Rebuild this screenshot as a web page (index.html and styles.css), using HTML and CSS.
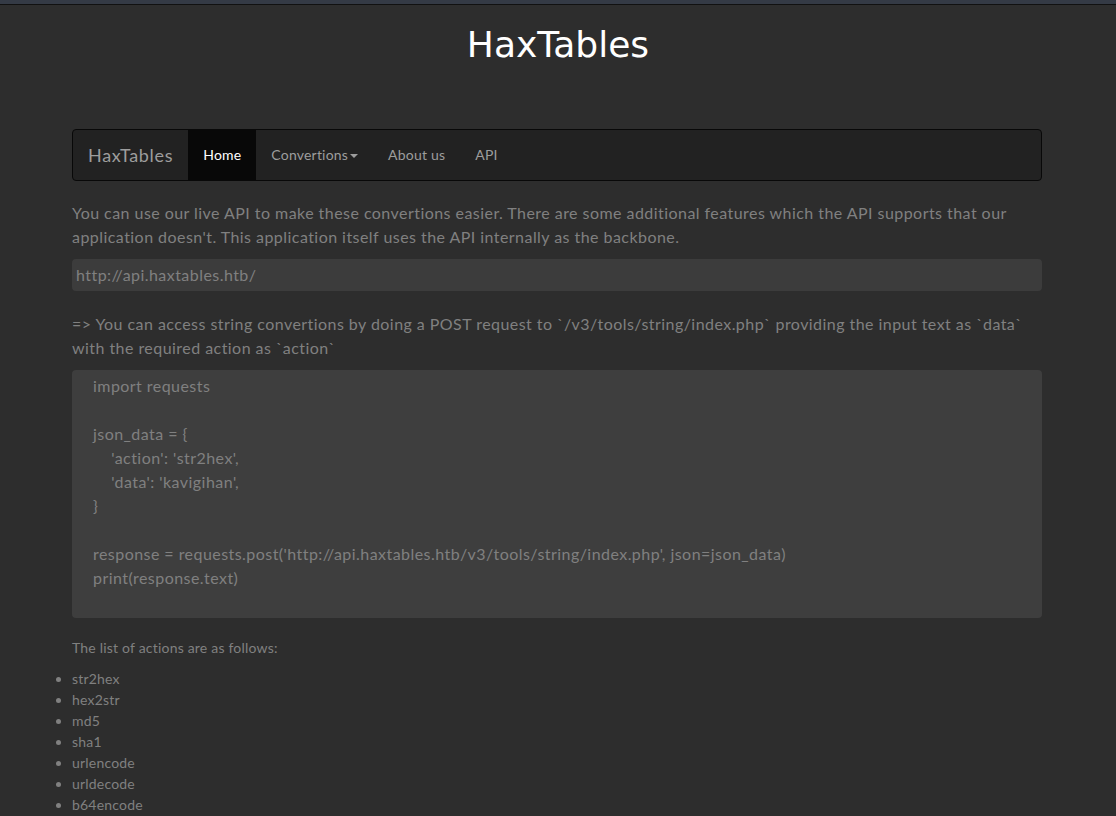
FILE: index.html
```html
<!DOCTYPE html>
<html>
<head>
<meta charset="utf-8">
<title>HaxTables</title>
<link rel="stylesheet" href="styles.css">
</head>
<body>
<div class="topbar"></div>
<h1 class="title">HaxTables</h1>
<div class="container">
  <nav class="navbar">
    <a class="brand" href="#">HaxTables</a>
    <ul class="nav">
      <li class="active"><a href="#">Home</a></li>
      <li><a href="#">Convertions<span class="caret"></span></a></li>
      <li><a href="#">About us</a></li>
      <li><a href="#">API</a></li>
    </ul>
  </nav>
  <p class="lead-text">You can use our live API to make these convertions easier. There are some additional features which the API supports that our application doesn't. This application itself uses the API internally as the backbone.</p>
  <div class="url-box">http://api.haxtables.htb/</div>
  <p class="lead-text spaced">=&gt; You can access string convertions by doing a POST request to `/v3/tools/string/index.php` providing the input text as `data` with the required action as `action`</p>
  <pre class="code">import requests

json_data = {
    'action': 'str2hex',
    'data': 'kavigihan',
}

response = requests.post('http://api.haxtables.htb/v3/tools/string/index.php', json=json_data)
print(response.text)</pre>
  <p class="small-text">The list of actions are as follows:</p>
  <ul class="actions">
    <li>str2hex</li>
    <li>hex2str</li>
    <li>md5</li>
    <li>sha1</li>
    <li>urlencode</li>
    <li>urldecode</li>
    <li>b64encode</li>
    <li>b64decode</li>
  </ul>
</div>
</body>
</html>
```
FILE: styles.css
```css
html, body {
  margin: 0;
  padding: 0;
}
body {
  background: #2d2d2d;
  font-family: Lato, "Noto Sans", sans-serif;
  color: #808080;
  font-size: 16px;
  line-height: 24px;
  letter-spacing: 0.45px;
}
.topbar {
  height: 4px;
  background: #343a45;
  border-bottom: 1px solid #111;
}
.title {
  font-family: "DejaVu Sans", sans-serif;
  font-weight: normal;
  font-size: 36px;
  line-height: 40px;
  letter-spacing: 0;
  color: #ffffff;
  text-align: center;
  margin: 20px 0 0;
}
.container {
  width: 970px;
  margin: 64px 0 0 calc(50% - 486px);
}
.navbar {
  display: flex;
  align-items: stretch;
  height: 50px;
  background: #222222;
  border: 1px solid #080808;
  border-radius: 4px;
  margin-bottom: 20px;
}
.brand {
  padding: 0 15px;
  font-size: 18px;
  letter-spacing: 0.7px;
  line-height: 50px;
  color: #9d9d9d;
  text-decoration: none;
}
.nav {
  display: flex;
  list-style: none;
  margin: 0;
  padding: 0;
}
.nav a {
  display: block;
  padding: 0 15px;
  line-height: 50px;
  font-size: 14px;
  letter-spacing: 0.2px;
  color: #9d9d9d;
  text-decoration: none;
}
.nav .active a {
  background: #080808;
  color: #ffffff;
}
.caret {
  display: inline-block;
  width: 0;
  height: 0;
  margin-left: 2px;
  vertical-align: middle;
  border-top: 4px solid #9d9d9d;
  border-left: 4px solid transparent;
  border-right: 4px solid transparent;
}
.lead-text {
  margin: 0 0 10px;
}
.lead-text.spaced {
  margin-top: 21px;
}
.url-box {
  background: #3c3c3c;
  border-radius: 4px;
  padding: 4px 4px;
  line-height: 24px;
}
.code {
  background: #3e3e3e;
  border-radius: 4px;
  margin: 0;
  padding: 4px 21px 28px;
  font-family: inherit;
  font-size: 16px;
  line-height: 24px;
  letter-spacing: 0.45px;
  color: #808080;
  white-space: pre;
}
.small-text {
  font-size: 14px;
  line-height: 20px;
  letter-spacing: 0.2px;
  margin: 20px 0 10px;
}
.actions {
  margin: 0;
  padding: 0;
  font-size: 14px;
  line-height: 21px;
  letter-spacing: 0.2px;
}
```
